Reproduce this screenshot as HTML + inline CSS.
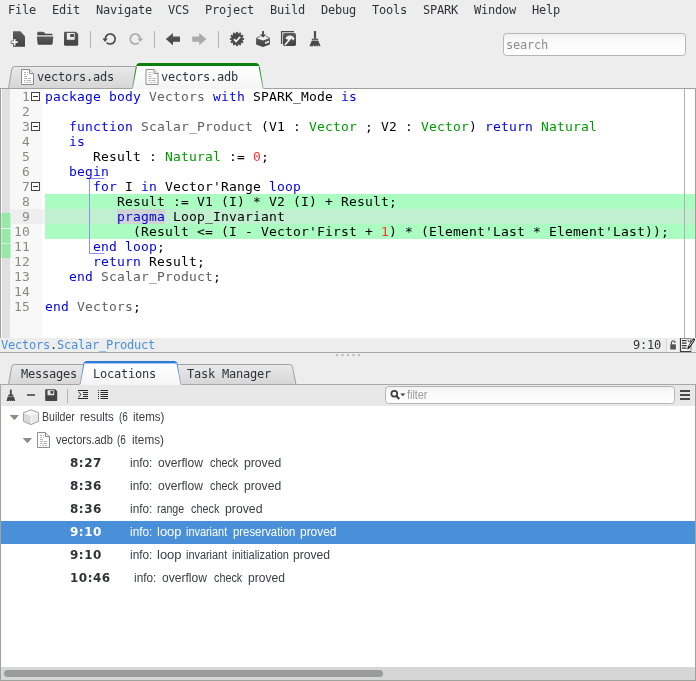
<!DOCTYPE html>
<html lang="en">
<head>
<meta charset="utf-8">
<title>GPS - vectors.adb</title>
<style>
html,body{margin:0;padding:0;}
body{width:696px;height:681px;background:#ededed;position:relative;overflow:hidden;
  font-family:"DejaVu Sans Mono","Liberation Mono",monospace;font-size:12px;letter-spacing:-0.2246px;color:#2e3436;}
.abs{position:absolute;white-space:pre;}
.menu,.abs,.tl,#code,#lnum,.tr,.tm{will-change:transform;}
#art{position:absolute;left:0;top:0;}
/* menu */
.menu{position:absolute;top:0;height:20px;line-height:20px;white-space:pre;color:#2e3436;}
/* tab labels */
.tl{position:absolute;white-space:pre;height:16px;line-height:16px;color:#2e3436;}
/* code */
#code{position:absolute;left:45px;top:89px;margin:0;font-family:"DejaVu Sans Mono","Liberation Mono",monospace;
  font-size:13px;letter-spacing:0.1733px;line-height:15px;color:#000;white-space:pre;}
#code div{height:15px;}
.k{color:#0000e6;}
.b{color:#606060;}
.t{color:#009900;}
.n{color:#ff3333;}
#lnum{position:absolute;left:5.5px;top:89px;width:24px;text-align:right;font-size:13px;letter-spacing:0.1733px;line-height:15px;color:#888a85;white-space:pre;}
#lnum div{height:15px;}
/* tree */
.tr{position:absolute;left:0;width:696px;white-space:pre;height:23px;line-height:23px;font-family:"Liberation Sans",sans-serif;font-size:12.5px;letter-spacing:0;color:#3a4043;}
.w{position:absolute;top:0;transform-origin:0 50%;display:block;}
.tm{position:absolute;white-space:pre;height:23px;line-height:23px;font-family:"DejaVu Sans","Liberation Sans",sans-serif;font-weight:bold;font-size:12px;letter-spacing:0.5px;color:#2e3436;}
.sel{color:#fff;}
</style>
</head>
<body>
<svg id="art" width="696" height="681" viewBox="0 0 696 681">
<defs>
<linearGradient id="gTabI" x1="0" y1="0" x2="0" y2="1"><stop offset="0" stop-color="#e9e9e9"/><stop offset="1" stop-color="#d6d6d6"/></linearGradient>
<linearGradient id="gTabA" x1="0" y1="0" x2="0" y2="1"><stop offset="0" stop-color="#ffffff"/><stop offset="0.5" stop-color="#fcfcfc"/><stop offset="1" stop-color="#f3f3f3"/></linearGradient>
<linearGradient id="gEntry" x1="0" y1="0" x2="0" y2="1"><stop offset="0" stop-color="#eeeeee"/><stop offset="0.3" stop-color="#f9f9f9"/><stop offset="1" stop-color="#ffffff"/></linearGradient>
<linearGradient id="gIcon" x1="0" y1="0" x2="0" y2="1"><stop offset="0" stop-color="#5c5c5c"/><stop offset="1" stop-color="#424242"/></linearGradient>
<linearGradient id="gEdgeG" gradientUnits="userSpaceOnUse" x1="0" y1="66" x2="0" y2="88"><stop offset="0" stop-color="#0b7f0b"/><stop offset="0.5" stop-color="#3f9a3f"/><stop offset="1" stop-color="#a8aca8"/></linearGradient>
<linearGradient id="gEdgeB" gradientUnits="userSpaceOnUse" x1="0" y1="363" x2="0" y2="384"><stop offset="0" stop-color="#2f7bd8"/><stop offset="0.5" stop-color="#6ea2e0"/><stop offset="1" stop-color="#a8a8ac"/></linearGradient>
</defs>
<!-- TOOLBAR ICONS -->
<g id="tb" fill="url(#gIcon)">
<!-- new file -->
<path d="M13 31.200h7.400l4.600 5v10.500h-12z"/>
<path d="M13.100 38.400h3v2.300h2.300v3h-2.300v2.300h-3v-2.300h-2.300v-3h2.300z" fill="#4a4a4a"/>
<path d="M13.700 39h1.800v2.300h2.300v1.800h-2.300v2.300h-1.800v-2.300h-2.300v-1.800h2.300z" fill="#f6f6f6"/>
<!-- folder -->
<path d="M37.300 35.300v-2.400c0-.7.500-1.200 1.200-1.200h4.200c.6 0 1 .2 1.400 .6l1.300 1.400h6c.7 0 1.200.5 1.200 1.200v.4z"/>
<path d="M36.800 36.500h16.600l-.9 7.400c-.1.500-.5.800-1 .800h-12.800c-.5 0-.9-.3-1-.8z"/>
<!-- save -->
<path d="M65.200 31.700h10.800l2.200 2.200v10.700c0 .7-.5 1.200-1.200 1.200h-11.800c-.7 0-1.200-.5-1.200-1.200v-11.700c0-.7.500-1.200 1.200-1.200zm1.700 1.200v6.900h7.800v-6.900zm3.200 1.100h3.900v2.900h-3.900z" fill-rule="evenodd"/>
</g>
<rect x="90" y="31" width="1" height="17" fill="#b4b4b4"/>
<!-- undo -->
<path d="M105.200 39A5 5 0 1 1 106.660 42.540" fill="none" stroke="#4a4a4a" stroke-width="1.700"/>
<path d="M102.400 38.600h5.400l-2.700 3.300z" fill="#4a4a4a"/>
<!-- redo -->
<path d="M140.200 39A5 5 0 1 0 138.740 42.540" fill="none" stroke="#aaaaaa" stroke-width="1.700"/>
<path d="M137.600 38.600h5.400l-2.700 3.300z" fill="#aaaaaa"/>
<rect x="154" y="31" width="1" height="17" fill="#b4b4b4"/>
<!-- back -->
<path d="M165.800 39.100l7.200-6.100v3.400h7v5.400h-7v3.400z" fill="url(#gIcon)"/>
<!-- forward -->
<path d="M206.400 39.100l-7.200-6.100v3.400h-7v5.400h7v3.400z" fill="#aaaaaa"/>
<rect x="218" y="31" width="1" height="17" fill="#b4b4b4"/>
<!-- badge check -->
<g fill="#4a4a4a">
<circle cx="237" cy="39" r="5.900"/>
<g id="teeth">
<circle cx="237.00" cy="32.80" r="1.05"/><circle cx="240.10" cy="33.63" r="1.05"/><circle cx="242.37" cy="35.90" r="1.05"/><circle cx="243.20" cy="39.00" r="1.05"/><circle cx="242.37" cy="42.10" r="1.05"/><circle cx="240.10" cy="44.37" r="1.05"/><circle cx="237.00" cy="45.20" r="1.05"/><circle cx="233.90" cy="44.37" r="1.05"/><circle cx="231.63" cy="42.10" r="1.05"/><circle cx="230.80" cy="39.00" r="1.05"/><circle cx="231.63" cy="35.90" r="1.05"/><circle cx="233.90" cy="33.63" r="1.05"/>
</g>
</g>
<path d="M233.900 39.100l2.200 2.300l4.200-4.600" fill="none" stroke="#f0f0f0" stroke-width="1.700"/>
<!-- box download -->
<g fill="url(#gIcon)">
<path d="M262 31h2v3.600h2.300l-3.300 3l-3.300-3h2.300z"/>
<path d="M256.100 38l6.900 2.600l6.900-2.600v6.500l-6.900 2.400l-6.900-2.400z"/>
</g>
<path d="M256.300 38.200l4-2M269.700 38.200l-4-2" fill="none" stroke="#4a4a4a" stroke-width="1" opacity=".75"/>
<path d="M265 42.300l4-1.500v1.600l-4 1.500z" fill="#f0f0f0"/>
<!-- hammer in window -->
<g>
<path d="M281.600 44v-12.400h12.400" fill="none" stroke="#4a4a4a" stroke-width="1.300"/>
<rect x="283" y="33" width="13" height="13" rx="1.800" fill="url(#gIcon)"/>
<path d="M284.900 45l6-7" stroke="#f0f0f0" stroke-width="1.800" fill="none"/>
<path d="M285.400 38.600C287 35 291.800 33.800 294.600 38.400L293.200 40.600C292.300 39 291.300 38.400 290.500 38.500L288.900 40.200z" fill="#f0f0f0"/>
</g>
<!-- broom -->
<g fill="#4a4a4a">
<rect x="313.900" y="30.900" width="2.200" height="7.800" rx=".6"/>
<path d="M311.800 38.600h6.400v1.900h-6.400z" fill="#5e5e5e"/>
<path d="M311.600 41h6.800l2.200 5.200h-1.600l-.6-1.400l-.3 1.400h-1.600l-.5-1.500l-.4 1.500h-1.700l-.4-1.400l-.5 1.400h-3.600z"/>
</g>
<!-- SEARCH ENTRY -->
<rect x="503.500" y="33.500" width="182" height="22" rx="3" fill="url(#gEntry)" stroke="#b6b6b3"/>

<!-- TOP TABS -->
<path d="M8.500 88.500L11.800 69Q12.300 66.500 14.800 66.500H136.500L132.500 88.500z" fill="url(#gTabI)" stroke="#a1a1a1"/>
<!-- editor frame -->
<rect x="0" y="88" width="696" height="250" fill="#ffffff"/>
<rect x="0" y="88" width="696" height="1" fill="#a0a2a0"/>
<rect x="0" y="88" width="1" height="250" fill="#a0a2a0"/>
<rect x="695" y="88" width="1" height="250" fill="#a0a2a0"/>
<!-- active tab -->
<clipPath id="cTabT"><path d="M132 89L136 66.500Q136.600 63 139.500 63H256Q258.900 63 259.500 66.500L263.600 89z"/></clipPath>
<g clip-path="url(#cTabT)">
<rect x="130" y="62" width="136" height="28" fill="url(#gTabA)"/>
<rect x="130" y="62" width="136" height="4" fill="#0b7f0b"/>
</g>
<path d="M132.500 88.500L136.400 66.500" fill="none" stroke="url(#gEdgeG)" stroke-width="1"/>
<path d="M259.200 66.500L263.100 88.500" fill="none" stroke="url(#gEdgeG)" stroke-width="1"/>
<!-- file icons in tabs -->
<g id="fi1">
<path d="M21.500 69.500h8l4 4v11h-12z" fill="#ffffff" stroke="#8c8c8c"/>
<path d="M29.500 69.500v4h4" fill="#e8e8e8" stroke="#8c8c8c"/>
<path d="M24 72.500h2M27 72.500h1M24 74.500h2M27 74.500h1M24 76.500h3M24 78.500h3M28 78.500h3M24 80.500h2M27 80.500h4M24 82.500h1M26 82.500h2M29 82.500h2" stroke="#b4b4b4" stroke-width="1"/>
</g>
<g id="fi2" transform="translate(124.500 0)">
<path d="M21.500 69.500h8l4 4v11h-12z" fill="#ffffff" stroke="#8c8c8c"/>
<path d="M29.500 69.500v4h4" fill="#e8e8e8" stroke="#8c8c8c"/>
<path d="M24 72.500h2M27 72.500h1M24 74.500h2M27 74.500h1M24 76.500h3M24 78.500h3M28 78.500h3M24 80.500h2M27 80.500h4M24 82.500h1M26 82.500h2M29 82.500h2" stroke="#b4b4b4" stroke-width="1"/>
</g>

<!-- EDITOR gutter -->
<rect x="1" y="89" width="1" height="249" fill="#f8f8f8"/>
<rect x="2" y="89" width="8" height="249" fill="#e0e0e0"/>
<rect x="10" y="89" width="32" height="249" fill="#f8f8f8"/>
<!-- green side marks -->
<g fill="#98e8ac">
<rect x="1" y="213" width="10" height="15"/>
<rect x="1" y="229" width="10" height="14"/>
<rect x="1" y="244" width="10" height="14"/>
</g>
<g fill="#b4f8c4">
<rect x="1" y="213" width="1" height="45"/><rect x="10" y="213" width="1" height="45"/>
</g>
<rect x="1" y="228" width="10" height="1" fill="#f4f4f4"/><rect x="1" y="243" width="10" height="1" fill="#d8f0dc"/>
<!-- green highlighted lines -->
<rect x="45" y="194" width="651" height="45" fill="#aafcc0"/>
<!-- current line -->
<rect x="11" y="209" width="31" height="15" fill="#eeeeee"/>
<rect x="42" y="209" width="3" height="15" fill="#f2f2f2"/>
<rect x="45" y="209" width="651" height="15" fill="#c0f0d0"/>
<!-- selection on pragma -->
<rect x="117" y="209" width="48" height="15" fill="#cfd3d1"/>
<!-- right margin line -->
<rect x="684" y="89" width="1" height="249" fill="#b0b0b0"/>
<rect x="695" y="88" width="1" height="250" fill="#a0a2a0"/>
<!-- block bracket -->
<path d="M104.500 178.500H89.500V253.500H104.500" fill="none" stroke="#9090f0" stroke-width="1"/>
<!-- fold boxes -->
<g fill="#ffffff" stroke="#444444">
<rect x="31.500" y="92.500" width="8" height="8"/>
<rect x="31.500" y="122.500" width="8" height="8"/>
<rect x="31.500" y="182.500" width="8" height="8"/>
</g>
<g fill="#333333">
<rect x="33" y="96" width="5" height="1"/><rect x="33" y="126" width="5" height="1"/><rect x="33" y="186" width="5" height="1"/>
</g>

<!-- STATUS BAR -->
<rect x="0" y="338" width="696" height="14" fill="#ededed"/>
<rect x="0" y="352" width="696" height="1" fill="#a8a8a8"/>
<rect x="666" y="339" width="1" height="13" fill="#d4d4d4"/>
<!-- lock -->
<rect x="667" y="339" width="13" height="13" fill="#f1f1f1"/>
<rect x="670.200" y="344.300" width="5.700" height="5.200" fill="#555555"/>
<path d="M671.400 344.500v-1.700a1.800 1.900 0 0 1 3.600 0v.2" fill="none" stroke="#555555" stroke-width="1.200"/>
<!-- edit icon -->
<g>
<rect x="680.500" y="338.500" width="10.500" height="13" fill="#fafafa" stroke="#8a8a8a"/>
<path d="M680.500 338.500v13h10.500" fill="none" stroke="#3c3c3c" stroke-width="1.200"/>
<path d="M682 340.600h4.600M682 343.100h4.600M682 345.600h4.600M682 348.100h4.600" stroke="#333333" stroke-width="1.300"/>
<path d="M687.300 349.700l.5-3.300l5-7.600q.6-.8 1.400-.3l.6 .5q.6 .6 .1 1.300l-5 7.600z" fill="#222222"/>
<path d="M689.200 346.400l4.300-6.500" stroke="#f4f4f4" stroke-width=".9" fill="none"/>
<path d="M688 339.500q0 2.500 1.400 2.500q1.300 0 1.300-2" stroke="#333333" stroke-width=".9" fill="none"/>
</g>
<!-- pane handle dots -->
<g fill="#b9bbb9">
<rect x="336" y="354" width="2" height="2"/><rect x="341.500" y="354" width="2" height="2"/><rect x="347" y="354" width="2" height="2"/><rect x="352.500" y="354" width="2" height="2"/><rect x="358" y="354" width="2" height="2"/>
</g>

<!-- BOTTOM TABS -->
<path d="M8.500 384.500L11.700 367Q12.200 364.500 14.700 364.500H84L80 384.500z" fill="url(#gTabI)" stroke="#a1a1a1"/>
<path d="M178 384.500L174 364.500H289.800Q292 364.500 292.500 367L296 384.500z" fill="url(#gTabI)" stroke="#a1a1a1"/>
<rect x="0" y="384" width="696" height="1" fill="#a8a8a8"/>
<clipPath id="cTabB"><path d="M79.600 385L83.400 363.500Q84 361 86.600 361H174.300Q176.900 361 177.500 363.500L181.400 385z"/></clipPath>
<g clip-path="url(#cTabB)">
<rect x="76" y="360" width="108" height="26" fill="url(#gTabA)"/>
<rect x="76" y="360" width="108" height="3.400" fill="#2f7bd8"/>
</g>
<path d="M80.100 384.500L83.900 363.500" fill="none" stroke="url(#gEdgeB)" stroke-width="1"/>
<path d="M177 363.500L180.900 384.500" fill="none" stroke="url(#gEdgeB)" stroke-width="1"/>

<!-- bottom toolbar -->
<rect x="0" y="385" width="696" height="21" fill="#e8e8e8"/>
<g fill="#444444">
<!-- broom small -->
<rect x="9.900" y="389.400" width="1.800" height="5.600" rx=".5"/>
<rect x="8.300" y="394.600" width="5" height="1.500"/>
<path d="M7.800 396.600h6l1.500 4.300h-1.300l-.4-1l-.3 1h-1.300l-.3-1.100l-.3 1.100h-1.400l-.3-1l-.4 1h-2.800z"/>
<!-- minus -->
<rect x="27" y="394" width="8" height="2" fill="#666666"/>
<!-- save small -->
<path d="M46.200 389.200h9l2 2v8.800c0 .6-.4 1-1 1h-10c-.6 0-1-.4-1-1v-9.800c0-.6.400-1 1-1zm1.300 1v5h6.700v-5zm3 .9h2.800v2.600h-2.800z" fill-rule="evenodd"/>
</g>
<rect x="67" y="389" width="1" height="14" fill="#b4b4b4"/>
<g fill="#2a2a2a">
<!-- expand icon -->
<path d="M78 390h10v1h-10zM83 392h5v1h-5zM83 394h5v1h-5zM83 396h5v1h-5zM78 398h10v1h-10z"/>
<path d="M78.300 391.800l2.800 2.700l-2.800 2.700" fill="none" stroke="#2a2a2a" stroke-width="1"/>
<!-- list icon -->
<path d="M98 390h1v1h-1zM98 392h1v1h-1zM98 394h1v1h-1zM98 396h1v1h-1zM98 398h1v1h-1zM100.500 390h7.500v1h-7.500zM100.500 392h7.500v1h-7.500zM100.500 394h7.500v1h-7.500zM100.500 396h7.500v1h-7.500zM100.500 398h7.500v1h-7.500z"/>
</g>
<rect x="0" y="385" width="1" height="21" fill="#a9aba9"/>
<rect x="695" y="384" width="1" height="22" fill="#a0a2a0"/>
<!-- filter entry -->
<rect x="385.500" y="386.500" width="289" height="17" rx="3" fill="url(#gEntry)" stroke="#b6b6b3"/>
<circle cx="394.300" cy="393.800" r="2.900" fill="none" stroke="#3c3c3c" stroke-width="1.700"/>
<path d="M396.300 396l3 3" stroke="#3c3c3c" stroke-width="2"/>
<path d="M400.300 393.500h5l-2.500 2.800z" fill="#3c3c3c"/>
<!-- hamburger -->
<g fill="#4a4a4a"><rect x="680" y="390" width="10" height="2"/><rect x="680" y="394" width="10" height="2"/><rect x="680" y="398" width="10" height="2"/></g>

<!-- TREE -->
<rect x="0" y="406" width="696" height="261" fill="#ffffff"/>
<rect x="0" y="405" width="1" height="276" fill="#a0a2a0"/>
<rect x="695" y="405" width="1" height="276" fill="#a0a2a0"/>
<rect x="1" y="521" width="694" height="23" fill="#4a90d9"/>
<!-- expander arrows -->
<path d="M9.700 415h9.400l-4.700 5.200z" fill="#8b8d88"/>
<path d="M22.700 438h9.400l-4.700 5.200z" fill="#8b8d88"/>
<!-- cube -->
<path d="M31 409.800l7.500 2.900v8.600l-7.500 3.300l-7.500-3.300v-8.600z" fill="#ececec"/>
<path d="M31 409.800l7.500 2.900l-7.500 3l-7.500-3z" fill="#f7f7f7"/>
<path d="M23.500 412.700l7.500 3v8.900l-7.500-3.300z" fill="#d9d9d9"/>
<path d="M31 415.700v8.900l7.500-3.300v-8.600z" fill="#e9e9e9"/>
<path d="M23.500 412.700l7.500 3l7.500-3M31 415.700v8.900" fill="none" stroke="#fafafa" stroke-width=".8"/>
<path d="M31 409.800l7.500 2.900v8.600l-7.500 3.300l-7.500-3.300v-8.600z" fill="none" stroke="#a2a2a2" stroke-linejoin="round"/>
<!-- file icon tree -->
<g transform="translate(16 363)">
<path d="M21.500 69.500h8l4 4v11h-12z" fill="#ffffff" stroke="#8c8c8c"/>
<path d="M29.500 69.500v4h4" fill="#e8e8e8" stroke="#8c8c8c"/>
<path d="M24 72.500h2M27 72.500h1M24 74.500h2M27 74.500h1M24 76.500h3M24 78.500h3M28 78.500h3M24 80.500h2M27 80.500h4M24 82.500h1M26 82.500h2M29 82.500h2" stroke="#b4b4b4" stroke-width="1"/>
</g>
<!-- scrollbar -->
<rect x="1" y="667" width="694" height="13" fill="#d6d6d6"/>
<rect x="4" y="670" width="379" height="7" rx="3.500" fill="#9a9c9b"/>
<rect x="0" y="680" width="696" height="1" fill="#a0a2a0"/>
</svg>

<!-- MENU BAR -->
<div class="menu" style="left:8px">File</div>
<div class="menu" style="left:52px">Edit</div>
<div class="menu" style="left:96px">Navigate</div>
<div class="menu" style="left:168px">VCS</div>
<div class="menu" style="left:205px">Project</div>
<div class="menu" style="left:270px">Build</div>
<div class="menu" style="left:321px">Debug</div>
<div class="menu" style="left:372px">Tools</div>
<div class="menu" style="left:423px">SPARK</div>
<div class="menu" style="left:474px">Window</div>
<div class="menu" style="left:532px">Help</div>

<div class="abs" style="left:506px;top:37px;height:16px;line-height:16px;color:#8c8c8c">search</div>

<!-- TAB LABELS -->
<div class="tl" style="left:37px;top:69px">vectors.ads</div>
<div class="tl" style="left:160.500px;top:69px">vectors.adb</div>

<!-- LINE NUMBERS -->
<div id="lnum"><div>1</div><div>2</div><div>3</div><div>4</div><div>5</div><div>6</div><div>7</div><div>8</div><div>9</div><div>10</div><div>11</div><div>12</div><div>13</div><div>14</div><div>15</div></div>

<!-- CODE -->
<div id="code"><div><span class="k">package body</span> <span class="b">Vectors</span> <span class="k">with</span> SPARK_Mode <span class="k">is</span></div><div> </div><div>   <span class="k">function</span> <span class="b">Scalar_Product</span> (V1 : <span class="t">Vector</span> ; V2 : <span class="t">Vector</span>) <span class="k">return</span> <span class="t">Natural</span></div><div>   <span class="k">is</span></div><div>      Result : <span class="t">Natural</span> := <span class="n">0</span>;</div><div>   <span class="k">begin</span></div><div>      <span class="k">for</span> I <span class="k">in</span> Vector'Range <span class="k">loop</span></div><div>         Result := V1 (I) * V2 (I) + Result;</div><div>         <span class="k">pragma</span> Loop_Invariant</div><div>           (Result &lt;= (I - Vector'First + <span class="n">1</span>) * (Element'Last * Element'Last));</div><div>      <span class="k">end loop</span>;</div><div>      <span class="k">return</span> Result;</div><div>   <span class="k">end</span> <span class="b">Scalar_Product</span>;</div><div> </div><div><span class="k">end</span> <span class="b">Vectors</span>;</div></div>

<!-- STATUS BAR -->
<div class="abs" style="left:1px;top:338px;height:15px;line-height:15px;color:#4a90d9">Vectors<span style="color:#2e3436">.</span>Scalar_Product</div>
<div class="abs" style="left:633px;top:338px;height:15px;line-height:15px;color:#2e3436">9:10</div>

<!-- BOTTOM TAB LABELS -->
<div class="tl" style="left:21px;top:366px">Messages</div>
<div class="tl" style="left:93px;top:366px">Locations</div>
<div class="tl" style="left:187px;top:366px">Task Manager</div>

<div class="tr" style="top:385px;color:#9a9a9a;height:21px;line-height:21px"><span class="w" style="left:406.60px;transform:scaleX(0.8667)">filter</span></div>
<div class="tr" style="top:406px"><span class="w" style="left:42.16px;transform:scaleX(0.8421)">Builder</span> <span class="w" style="left:80.34px;transform:scaleX(0.9143)">results</span> <span class="w" style="left:118.70px;transform:scaleX(0.8000)">(6</span> <span class="w" style="left:132.83px;transform:scaleX(0.9219)">items)</span></div>
<div class="tr" style="top:429px"><span class="w" style="left:56.25px;transform:scaleX(0.8789)">vectors.adb</span> <span class="w" style="left:117.45px;transform:scaleX(0.8000)">(6</span> <span class="w" style="left:131.56px;transform:scaleX(0.9375)">items)</span></div>
<div class="tr" style="top:452px"><span class="w" style="left:129.55px;transform:scaleX(0.9455)">info:</span> <span class="w" style="left:158.00px;transform:scaleX(0.9638)">overflow</span> <span class="w" style="left:209.50px;transform:scaleX(0.8636)">check</span> <span class="w" style="left:243.53px;transform:scaleX(0.9730)">proved</span></div>
<div class="tr" style="top:475px"><span class="w" style="left:129.55px;transform:scaleX(0.9455)">info:</span> <span class="w" style="left:158.00px;transform:scaleX(0.9638)">overflow</span> <span class="w" style="left:209.50px;transform:scaleX(0.8636)">check</span> <span class="w" style="left:243.53px;transform:scaleX(0.9730)">proved</span></div>
<div class="tr" style="top:498px"><span class="w" style="left:129.55px;transform:scaleX(0.9455)">info:</span> <span class="w" style="left:156.85px;transform:scaleX(0.8484)">range</span> <span class="w" style="left:190.70px;transform:scaleX(0.8667)">check</span> <span class="w" style="left:225.02px;transform:scaleX(0.9811)">proved</span></div>
<div class="tr sel" style="top:521px"><span class="w" style="left:129.55px;transform:scaleX(0.9455)">info:</span> <span class="w" style="left:157.16px;transform:scaleX(1.0364)">loop</span> <span class="w" style="left:186.33px;transform:scaleX(0.8717)">invariant</span> <span class="w" style="left:232.59px;transform:scaleX(0.9075)">preservation</span> <span class="w" style="left:299.75px;transform:scaleX(0.9541)">proved</span></div>
<div class="tr" style="top:544px"><span class="w" style="left:129.55px;transform:scaleX(0.9455)">info:</span> <span class="w" style="left:157.16px;transform:scaleX(1.0364)">loop</span> <span class="w" style="left:186.33px;transform:scaleX(0.8717)">invariant</span> <span class="w" style="left:232.12px;transform:scaleX(0.8810)">initialization</span> <span class="w" style="left:293.33px;transform:scaleX(0.9703)">proved</span></div>
<div class="tr" style="top:567px"><span class="w" style="left:133.85px;transform:scaleX(0.9455)">info:</span> <span class="w" style="left:162.30px;transform:scaleX(0.9638)">overflow</span> <span class="w" style="left:213.80px;transform:scaleX(0.8636)">check</span> <span class="w" style="left:247.84px;transform:scaleX(0.9649)">proved</span></div>
<div class="tm" style="left:69.5px;top:452px">8:27</div>
<div class="tm" style="left:69.5px;top:475px">8:36</div>
<div class="tm" style="left:69.5px;top:498px">8:36</div>
<div class="tm sel" style="left:69.5px;top:521px">9:10</div>
<div class="tm" style="left:69.5px;top:544px">9:10</div>
<div class="tm" style="left:69.5px;top:567px">10:46</div>
</body>
</html>
